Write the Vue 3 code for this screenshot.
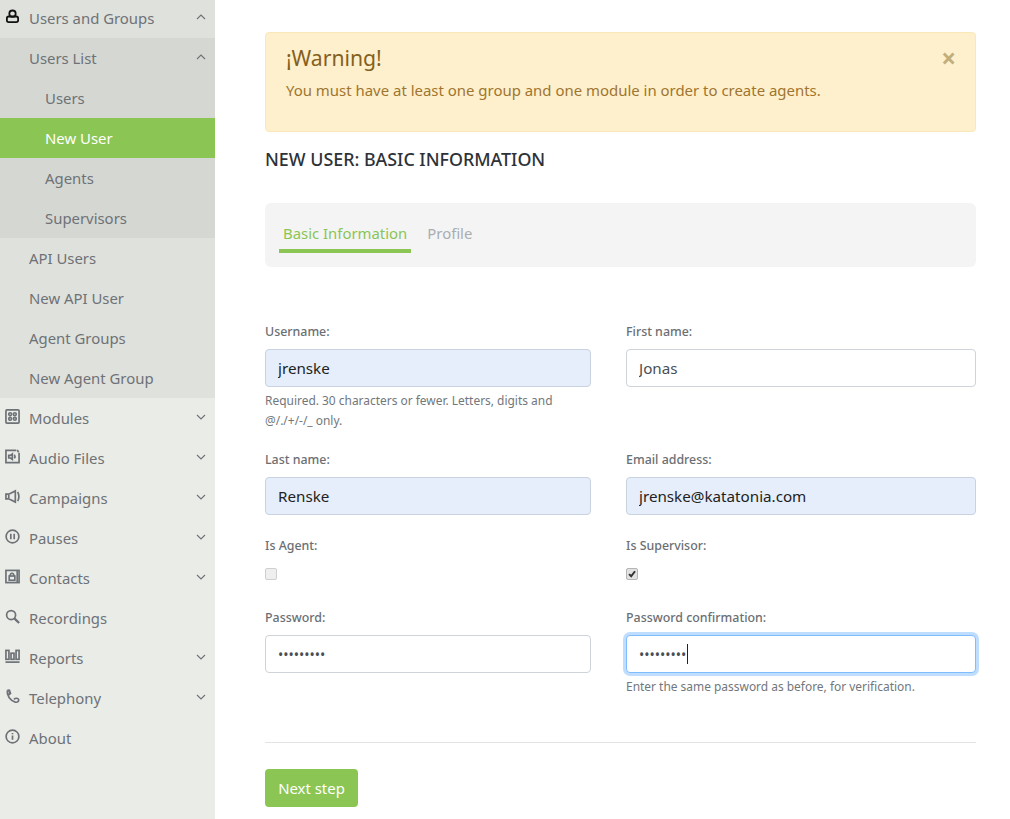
<template>
  <div class="page">
    <aside class="sidebar">
      <template v-for="item in menu" :key="item.label">
        <div class="row" :class="{ open: item.open }">
          <svg class="icon" :class="{ dark: item.open }" viewBox="0 0 16 16" v-html="item.icon"></svg>
          <span class="row-label">{{ item.label }}</span>
          <svg v-if="item.chevron" class="chevron" viewBox="0 0 10 6">
            <path :d="item.open ? 'M1 5l4-4 4 4' : 'M1 1l4 4 4-4'" />
          </svg>
        </div>
        <div v-if="item.children" class="submenu">
          <div class="sub-group">
            <div class="sub-row">
              <span>Users List</span>
              <svg class="chevron" viewBox="0 0 10 6"><path d="M1 5l4-4 4 4" /></svg>
            </div>
            <div
              v-for="leaf in leaves"
              :key="leaf"
              class="leaf"
              :class="{ active: leaf === 'New User' }"
            >{{ leaf }}</div>
          </div>
          <div v-for="child in item.children" :key="child" class="child">{{ child }}</div>
        </div>
      </template>
    </aside>

    <main class="content">
      <div class="alert">
        <h4>¡Warning!</h4>
        <p>You must have at least one group and one module in order to create agents.</p>
        <span class="close">×</span>
      </div>

      <h2 class="title">NEW USER: BASIC INFORMATION</h2>

      <div class="tabs">
        <span class="tab current">Basic Information</span>
        <span class="tab">Profile</span>
      </div>

      <form class="form" @submit.prevent>
        <div class="field">
          <label>Username:</label>
          <input class="input filled" type="text" value="jrenske" readonly />
          <small>Required. 30 characters or fewer. Letters, digits and @/./+/-/_ only.</small>
        </div>
        <div class="field">
          <label>First name:</label>
          <input class="input" type="text" value="Jonas" readonly />
        </div>
        <div class="field">
          <label>Last name:</label>
          <input class="input filled" type="text" value="Renske" readonly />
        </div>
        <div class="field">
          <label>Email address:</label>
          <input class="input filled" type="text" value="jrenske@katatonia.com" readonly />
        </div>
        <div class="field check-field">
          <label>Is Agent:</label>
          <span class="checkbox"></span>
        </div>
        <div class="field check-field">
          <label>Is Supervisor:</label>
          <span class="checkbox checked">
            <svg viewBox="0 0 12 12"><path d="M2.500 6.200l2.500 2.500 4.600-6" /></svg>
          </span>
        </div>
        <div class="field">
          <label>Password:</label>
          <input class="input secret" type="password" value="123456789" readonly />
        </div>
        <div class="field">
          <label>Password confirmation:</label>
          <div class="focus-wrap">
            <input class="input secret focused" type="password" value="123456789" readonly />
            <span class="caret"></span>
          </div>
          <small>Enter the same password as before, for verification.</small>
        </div>
      </form>

      <hr class="rule" />
      <button class="next" type="button">Next step</button>
    </main>
  </div>
</template>

<script setup>
const leaves = ['Users', 'New User', 'Agents', 'Supervisors']

const menu = [
  {
    label: 'Users and Groups',
    open: true,
    chevron: true,
    icon: '<circle cx="8" cy="5" r="3.4"/><rect x="2" y="8" width="12" height="6" rx="2"/>',
    children: ['API Users', 'New API User', 'Agent Groups', 'New Agent Group'],
  },
  {
    label: 'Modules',
    chevron: true,
    icon: '<rect x="1" y="1" width="14" height="14" rx="1"/><circle cx="5.500" cy="5.500" r="1.500"/><circle cx="10.500" cy="5.500" r="1.500"/><circle cx="5.500" cy="10.500" r="1.500"/><circle cx="10.500" cy="10.500" r="1.500"/>',
  },
  {
    label: 'Audio Files',
    chevron: true,
    icon: '<path d="M12 1.500H1v13h14V4"/><path d="M4 6.800v2.800h1.800l2 1.500V5.300l-2 1.500zM10 6c.8 1.200.8 2.800 0 4M13 1l1.500 2.500"/>',
  },
  {
    label: 'Campaigns',
    chevron: true,
    icon: '<path d="M1 5.500v5h3l7 3.500V2L4 5.500zM4 5.500v5M13.500 3c1.600 3 1.600 7 0 10"/>',
  },
  {
    label: 'Pauses',
    chevron: true,
    icon: '<circle cx="8" cy="8" r="6.800"/><path d="M6.200 5v6M9.800 5v6"/>',
  },
  {
    label: 'Contacts',
    chevron: true,
    icon: '<rect x="1" y="1.500" width="14" height="13"/><path d="M13 1.500v13"/><rect x="4.500" y="7.500" width="6" height="4.500"/><path d="M5.500 7.500c0-4 4-4 4 0"/>',
  },
  {
    label: 'Recordings',
    icon: '<circle cx="6.500" cy="6.500" r="4.800"/><path d="M10 10l5 5" stroke-width="2.400"/>',
  },
  {
    label: 'Reports',
    chevron: true,
    icon: '<rect x="1" y="1.500" width="3.200" height="9.500"/><rect x="6.400" y="4.500" width="3.200" height="6.500"/><rect x="11.800" y="1.500" width="3.200" height="9.500"/><path d="M0.500 14h15"/>',
  },
  {
    label: 'Telephony',
    chevron: true,
    icon: '<path d="M2.500 1.500C1.500 7 6 12.500 11 14c2.500.5 4-.8 3.500-2.800-.5-1.700-3.500-1.700-5-.2"/><path d="M2.500 1.500l2 .2 1 3-2 1.500" stroke-width="2.400"/>',
  },
  {
    label: 'About',
    icon: '<circle cx="8" cy="8" r="6.800"/><path d="M8 7v4.500M8 4.200v1.500"/>',
  },
]
</script>

<style>
html,
body {
  margin: 0;
  background: #fff;
}
</style>

<style scoped>
.page {
  display: flex;
  height: 819px;
  overflow: hidden;
  font-family: "Noto Sans", sans-serif;
  color: #333;
}

/* sidebar */
.sidebar {
  width: 215px;
  flex-shrink: 0;
  background: #eaece8;
  color: #6e7276;
  font-size: 14.9px;
}

.row,
.sub-row,
.child,
.leaf {
  display: flex;
  align-items: center;
  height: 40px;
  box-sizing: border-box;
}

.row {
  padding: 0 9px 0 5px;
}

.row.open {
  height: 38px;
  padding-bottom: 2px;
  background: #dfe1dd;
}

.icon {
  width: 15px;
  height: 15px;
  margin-right: 9px;
  margin-top: -3px;
  fill: none;
  stroke: #6e7276;
  stroke-width: 1.800;
}

.icon.dark {
  stroke: #111;
  stroke-width: 1.900;
}

.row-label,
.sub-row span {
  flex: 1;
}

.chevron {
  width: 10px;
  height: 6px;
  margin-top: -2px;
  fill: none;
  stroke: #6e7276;
  stroke-width: 1.100;
}

.submenu {
  background: #dfe1dd;
}

.sub-group {
  background: #d5d7d3;
}

.sub-row {
  padding: 0 9px 0 29px;
}

.child {
  padding-left: 29px;
}

.leaf {
  padding-left: 45px;
}

.leaf.active {
  background: #8bc554;
  color: #fff;
}

/* main */
.content {
  width: 711px;
  margin-left: 50px;
  padding-top: 32px;
}

.alert {
  position: relative;
  box-sizing: border-box;
  height: 100px;
  padding: 9px 20px;
  background: #fef0cd;
  border: 1px solid #fbe8b8;
  border-radius: 4px;
  color: #a0752f;
  font-size: 14.950px;
}

.alert h4 {
  margin: 0;
  font-size: 21.200px;
  font-weight: 400;
  color: #85601d;
  line-height: 32px;
}

.alert p {
  margin: 4px 0 0;
  line-height: 25px;
}

.close {
  position: absolute;
  top: 8px;
  right: 19px;
  font-size: 26px;
  line-height: 34px;
  font-weight: 700;
  color: #c2ae7c;
}

.title {
  margin: 15px 0 0;
  font-size: 17.850px;
  line-height: 25px;
  font-weight: 500;
  color: #2d3238;
}

.tabs {
  display: flex;
  gap: 12px;
  box-sizing: border-box;
  height: 64px;
  margin-top: 31px;
  padding: 15px 14px 0;
  background: #f4f4f4;
  border-radius: 6px;
}

.tab {
  box-sizing: border-box;
  height: 35px;
  padding: 3px 4px 0;
  font-size: 14.900px;
  line-height: 24px;
  color: #a9adb2;
}

.tab.current {
  color: #8bc554;
  border-bottom: 4px solid #8bc554;
}

.form {
  display: grid;
  grid-template-columns: 326px 350px;
  column-gap: 35px;
  row-gap: 20px;
  margin-top: 56px;
  margin-bottom: 45px;
}

.field {
  display: flex;
  flex-direction: column;
}

.field label {
  height: 18px;
  margin-bottom: 8px;
  font-size: 12.400px;
  line-height: 18px;
  font-weight: 500;
  color: #6b6f73;
}

.input {
  box-sizing: border-box;
  width: 100%;
  height: 38px;
  padding: 0 12px;
  border: 1px solid #ced4da;
  border-radius: 4px;
  background: #fff;
  font-family: inherit;
  font-size: 15.200px;
  color: #494f54;
  outline: none;
}

.input.filled {
  background: #e6eefb;
  border-color: #c8d2e0;
  color: #222;
}

.input.secret {
  font-size: 14px;
}

.input.focused {
  border-color: #80bdff;
  box-shadow: 0 0 0 3px #bfdeff;
}

.focus-wrap {
  position: relative;
}

.caret {
  position: absolute;
  left: 61px;
  top: 9px;
  width: 1px;
  height: 20px;
  background: #222;
}

small {
  margin-top: 4px;
  font-size: 11.950px;
  line-height: 20px;
  color: #71777c;
}

.check-field {
  min-height: 52px;
  margin-top: 2px;
}

.checkbox {
  display: block;
  box-sizing: border-box;
  width: 12px;
  height: 12px;
  margin-top: 5px;
  border: 1px solid #cfcfcf;
  border-radius: 2px;
  background: #efefef;
}

.checkbox.checked {
  border-color: #b5b5b5;
  background: #e2e2e2;
}

.checkbox svg {
  display: block;
  width: 10px;
  height: 10px;
  fill: none;
  stroke: #333;
  stroke-width: 2.400;
}

.rule {
  margin: 0;
  border: 0;
  border-top: 1px solid #e3e3e3;
}

.next {
  display: block;
  box-sizing: border-box;
  width: 93px;
  height: 38px;
  margin-top: 26px;
  border: 0;
  border-radius: 4px;
  background: #8bc554;
  color: #fff;
  font-family: inherit;
  font-size: 14.900px;
}
</style>
